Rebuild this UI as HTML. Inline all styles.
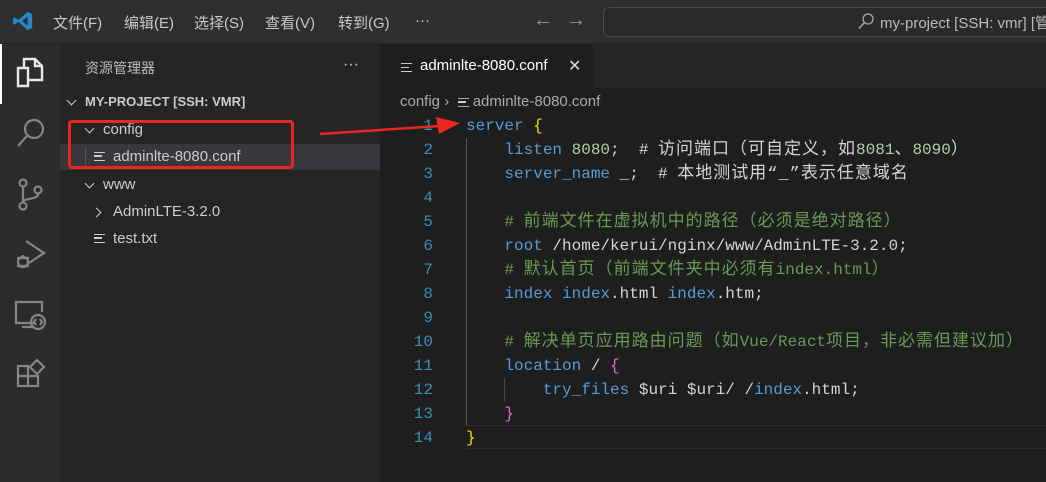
<!DOCTYPE html>
<html><head><meta charset="utf-8"><style>
*{margin:0;padding:0;box-sizing:border-box}
body{width:1046px;height:482px;overflow:hidden;background:#1e1e1e;font-family:"Liberation Sans","Noto Sans CJK SC",sans-serif;color:#ccc;position:relative}
.abs{position:absolute}
#title{left:0;top:0;width:1046px;height:44px;background:#2f2f2f;border-bottom:1px solid #252525}
.menu{top:12px;font-size:15px;color:#c8c8c8}
#act{left:0;top:44px;width:60px;height:438px;background:#2c2c2c}
#side{left:60px;top:44px;width:320px;height:438px;background:#252526}
.row{position:absolute;left:0;width:320px;height:26px;font-size:15px;line-height:26px;color:#ccc}
#tabs{left:380px;top:44px;width:666px;height:44px;background:#252526}
#tab{left:380px;top:44px;width:213px;height:44px;background:#1e1e1e}
.code{font-family:"Liberation Mono","Noto Sans CJK SC",monospace;font-size:16px;white-space:pre}
.ln,.cl{height:24px;line-height:24px;overflow:visible}
.ln{position:absolute;left:380px;width:53px;text-align:right;color:#3c8fb0;font-family:"Liberation Mono",monospace;font-size:16px}
.cl{position:absolute;left:466px}
.k{color:#569cd6}.n{color:#b5cea8}.c{color:#6a9955}.t{color:#d4d4d4}.y{color:#ffd700}.p{color:#da70d6}
.cj{font-size:17px;letter-spacing:1px}
.fi{display:inline-block;width:11px;height:9px;border-top:1.5px solid #ccc;border-bottom:1.5px solid #ccc;position:relative;vertical-align:middle}
.fi:after{content:"";position:absolute;left:0;top:2.5px;width:8px;height:1.5px;background:#ccc}
.chev{position:absolute;width:7px;height:7px;border-right:1.5px solid #ccc;border-bottom:1.5px solid #ccc}
</style></head><body>
<div id="title" class="abs"></div>
<svg class="abs" style="left:12px;top:10px" width="22" height="22" viewBox="0 0 24 24"><path d="M17 2l5 2.5v15L17 22 7 13l-4 3-2-1V9l2-1 4 3 10-9zM17 7l-6 5 6 5z" fill="#2489ca"/></svg>
<div class="abs menu" style="left:53px">文件(F)</div>
<div class="abs menu" style="left:124px">编辑(E)</div>
<div class="abs menu" style="left:194px">选择(S)</div>
<div class="abs menu" style="left:265px">查看(V)</div>
<div class="abs menu" style="left:338px">转到(G)</div>
<div class="abs menu" style="left:415px;top:12px">···</div>
<div class="abs" style="left:533px;top:9px;font-size:20px;color:#999">←</div>
<div class="abs" style="left:566px;top:9px;font-size:20px;color:#999">→</div>
<div class="abs" style="left:603px;top:7px;width:450px;height:30px;border:1px solid #4a4a4a;border-radius:6px;background:#2a2a2a"></div>
<svg class="abs" style="left:858px;top:13px" width="16" height="17" viewBox="0 0 16 17"><circle cx="10" cy="6" r="5" fill="none" stroke="#aaa" stroke-width="1.3"/><path d="M6.5 9.5L1 15.5" stroke="#aaa" stroke-width="1.5"/></svg>
<div class="abs" style="left:880px;top:12px;font-size:15px;color:#bbb;white-space:nowrap">my-project [SSH: vmr] [管</div>

<div id="act" class="abs"></div>
<div class="abs" style="left:0;top:44px;width:2px;height:60px;background:#fff"></div>
<svg class="abs" style="left:14px;top:56px" width="32" height="34" viewBox="0 0 32 34" fill="none" stroke="#e8e8e8" stroke-width="2.4"><path d="M4 12h10v18H4z"/><path d="M10 12V3h11l7 7v14H14"/><path d="M21 3v7h7"/></svg>
<svg class="abs" style="left:15px;top:116px" width="32" height="34" viewBox="0 0 32 34" fill="none" stroke="#858585" stroke-width="2.2"><circle cx="19" cy="13" r="9"/><path d="M12 20L3 30"/></svg>
<svg class="abs" style="left:16px;top:178px" width="30" height="34" viewBox="0 0 30 34" fill="none" stroke="#858585" stroke-width="2.2"><circle cx="7" cy="5" r="3.5"/><circle cx="7" cy="28" r="3.5"/><circle cx="22" cy="12" r="3.5"/><path d="M7 9v15M22 16c0 6-15 4-15 8"/></svg>
<svg class="abs" style="left:14px;top:238px" width="34" height="34" viewBox="0 0 34 34" fill="none" stroke="#858585" stroke-width="2.2"><path d="M12 3l18 12-15 10"/><circle cx="9" cy="24" r="5"/><path d="M3 20h12M3 28h12M9 19v-2"/></svg>
<svg class="abs" style="left:14px;top:298px" width="34" height="34" viewBox="0 0 34 34" fill="none" stroke="#858585" stroke-width="2.2"><path d="M20 25H2V4h26v10"/><path d="M8 29h10"/><circle cx="24" cy="24" r="7"/><path d="M22 21l-2 3 2 3M26 21l2 3-2 3"/></svg>
<svg class="abs" style="left:16px;top:358px" width="30" height="30" viewBox="0 0 30 30" fill="none" stroke="#858585" stroke-width="2.2"><path d="M2 8h10v10h10v10H2zM2 18h10v10M12 18v10"/><path d="M21 2l7 7-7 7-7-7z"/></svg>

<div id="side" class="abs">
<div class="abs" style="left:25px;top:14px;font-size:14px;color:#bbb">资源管理器</div>
<div class="abs" style="left:283px;top:12px;font-size:16px;color:#ccc">···</div>
<div class="row" style="top:45px;font-weight:bold;font-size:13px"><span class="chev" style="left:8px;top:8px;transform:rotate(45deg)"></span><span style="position:absolute;left:25px">MY-PROJECT [SSH: VMR]</span></div>
<div class="row" style="top:73px"><span class="chev" style="left:26px;top:8px;transform:rotate(45deg)"></span><span style="position:absolute;left:43px">config</span></div>
<div class="row" style="top:100px;background:#37373d"><span style="position:absolute;left:25px;top:3px;width:1px;height:22px;background:#555"></span><span style="position:absolute;left:34px;top:-1px"><i class="fi"></i></span><span style="position:absolute;left:53px">adminlte-8080.conf</span></div>
<div class="row" style="top:128px"><span class="chev" style="left:26px;top:8px;transform:rotate(45deg)"></span><span style="position:absolute;left:43px">www</span></div>
<div class="row" style="top:155px"><span class="chev" style="left:33px;top:10px;transform:rotate(-45deg)"></span><span style="position:absolute;left:53px">AdminLTE-3.2.0</span></div>
<div class="row" style="top:182px"><span style="position:absolute;left:34px;top:-1px"><i class="fi"></i></span><span style="position:absolute;left:53px">test.txt</span></div>
</div>

<div id="tabs" class="abs"></div>
<div id="tab" class="abs"><span class="abs" style="left:21px;top:15px"><i class="fi"></i></span><span class="abs" style="left:40px;top:13px;font-size:15px;color:#fff">adminlte-8080.conf</span><span class="abs" style="left:188px;top:12px;font-size:16px;color:#ddd">✕</span></div>
<div class="abs" style="left:400px;top:93px;font-size:15px;color:#aaa;white-space:nowrap">config ›&nbsp; <i class="fi" style="border-color:#aaa"></i> adminlte-8080.conf</div>

<div class="abs" style="left:466px;top:425px;width:580px;height:24px;border-top:1px solid #2c2c2c;border-bottom:1px solid #2c2c2c"></div>
<div class="abs" style="left:466px;top:138px;width:1px;height:287px;background:#555"></div>
<div class="abs" style="left:504px;top:378px;width:1px;height:24px;background:#444"></div>

<div class="code">
<div class="ln" style="top:114px">1</div><div class="cl" style="top:114px"><span class="k">server</span> <span class="y">{</span></div>
<div class="ln" style="top:138px">2</div><div class="cl" style="top:138px">    <span class="k">listen</span> <span class="n">8080</span><span class="t">;  # <span class="cj">访问端口（可自定义，如</span></span><span class="n">8081</span><span class="t cj">、</span><span class="n">8090</span><span class="t cj">）</span></div>
<div class="ln" style="top:162px">3</div><div class="cl" style="top:162px">    <span class="k">server_name</span> <span class="t">_;  # <span class="cj">本地测试用“_”表示任意域名</span></span></div>
<div class="ln" style="top:186px">4</div>
<div class="ln" style="top:210px">5</div><div class="cl c" style="top:210px">    # <span class="cj">前端文件在虚拟机中的路径（必须是绝对路径）</span></div>
<div class="ln" style="top:234px">6</div><div class="cl" style="top:234px">    <span class="k">root</span> <span class="t">/home/kerui/nginx/www/AdminLTE-3.2.0;</span></div>
<div class="ln" style="top:258px">7</div><div class="cl c" style="top:258px">    # <span class="cj">默认首页（前端文件夹中必须有</span>index.html<span class="cj">）</span></div>
<div class="ln" style="top:282px">8</div><div class="cl" style="top:282px">    <span class="k">index</span> <span class="k">index</span><span class="t">.html</span> <span class="k">index</span><span class="t">.htm;</span></div>
<div class="ln" style="top:306px">9</div>
<div class="ln" style="top:330px">10</div><div class="cl c" style="top:330px">    # <span class="cj">解决单页应用路由问题（如</span>Vue/React<span class="cj">项目，非必需但建议加）</span></div>
<div class="ln" style="top:354px">11</div><div class="cl" style="top:354px">    <span class="k">location</span> <span class="t">/</span> <span class="p">{</span></div>
<div class="ln" style="top:378px">12</div><div class="cl" style="top:378px">        <span class="k">try_files</span> <span class="t">$uri $uri/ /</span><span class="k">index</span><span class="t">.html;</span></div>
<div class="ln" style="top:402px">13</div><div class="cl" style="top:402px">    <span class="p">}</span></div>
<div class="ln" style="top:426px">14</div><div class="cl" style="top:426px"><span class="y">}</span></div>
</div>

<div class="abs" style="left:68px;top:120px;width:226px;height:49px;border:3px solid #e8281e;border-radius:4px"></div>
<svg class="abs" style="left:0;top:0" width="1046" height="482"><path d="M320 134L440 126" stroke="#e8281e" stroke-width="2.5"/><path d="M460 123L436 117L439 134z" fill="#e8281e"/></svg>
</body></html>
